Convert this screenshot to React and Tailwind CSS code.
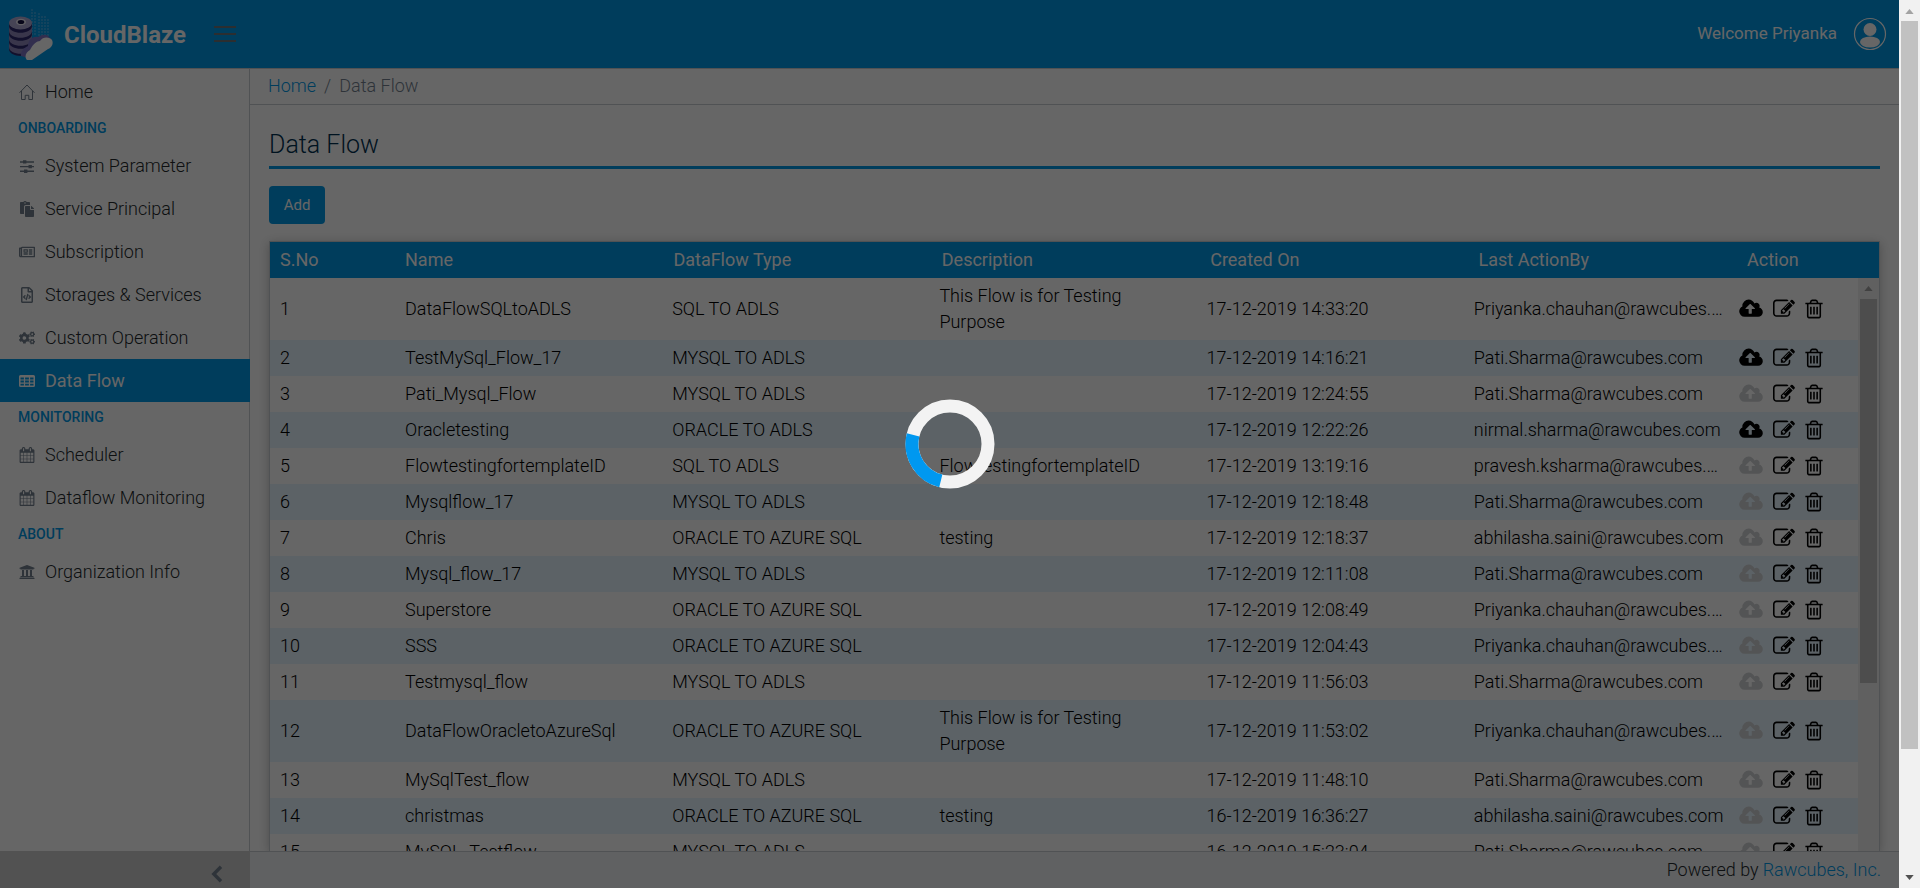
import React from "react";
import { FaPaste, FaRegNewspaper, FaRegFileCode, FaCogs, FaUniversity } from "react-icons/fa";

function HomeIcon({ className }) {
  return (
    <svg viewBox="0 0 16 16" className={className} fill="none" stroke="currentColor" strokeWidth="1">
      <path d="M0.5 8.8 8 1l7.5 7.8M2.5 7v8.5h3.7v-4.2h3.6v4.2h3.7V7" />
    </svg>
  );
}

function SlidersIcon({ className }) {
  return (
    <svg viewBox="0 0 16 16" className={className} fill="currentColor">
      <path d="M1 3.300h14v1.400H1zM4 2.200h3.400v3.400H4zM1 7.900h14v1.400H1zM9.500 6.900h3.400v3.400H9.500zM1 12.500h14v1.400H1zM5 11.500h3.400v3.400H5z" />
    </svg>
  );
}

function TableIcon({ className }) {
  return (
    <svg viewBox="0 0 16 16" className={className} fill="currentColor" fillRule="evenodd">
      <path d="M1.500 2h13A1.500 1.500 0 0 1 16 3.500v9a1.500 1.500 0 0 1-1.500 1.500h-13A1.500 1.500 0 0 1 0 12.500v-9A1.500 1.500 0 0 1 1.500 2zM1.500 4.500v2h3.400v-2zm4.600 0v2h3.800v-2zm5 0v2h3.400v-2zM1.500 7.600v2h3.400v-2zm4.600 0v2h3.800v-2zm5 0v2h3.400v-2zM1.500 10.700v1.800h3.400v-1.800zm4.600 0v1.800h3.800v-1.800zm5 0v1.800h3.400v-1.800z" />
    </svg>
  );
}

function CalendarIcon({ className }) {
  return (
    <svg viewBox="0 0 1792 1792" className={className} fill="currentColor">
      <path d="M192 1664h288v-288h-288v288zm352 0h320v-288h-320v288zm-352-352h288v-320h-288v320zm352 0h320v-320h-320v320zm-352-384h288v-288h-288v288zm736 736h320v-288h-320v288zm-384-736h320v-288h-320v288zm768 736h288v-288h-288v288zm-384-352h320v-320h-320v320zm-352-864v-288q0-13-9.500-22.500t-22.500-9.500h-64q-13 0-22.500 9.500t-9.500 22.500v288q0 13 9.500 22.500t22.500 9.500h64q13 0 22.500-9.500t9.500-22.500zm736 864h288v-320h-288v320zm-384-384h320v-288h-320v288zm384 0h288v-288h-288v288zm32-480v-288q0-13-9.500-22.500t-22.500-9.500h-64q-13 0-22.500 9.500t-9.500 22.500v288q0 13 9.500 22.500t22.500 9.500h64q13 0 22.500-9.500t9.500-22.500zm384-64v1280q0 52-38 90t-90 38h-1408q-52 0-90-38t-38-90v-1280q0-52 38-90t90-38h128v-96q0-66 47-113t113-47h64q66 0 113 47t47 113v96h384v-96q0-66 47-113t113-47h64q66 0 113 47t47 113v96h128q52 0 90 38t38 90z" />
    </svg>
  );
}

function ChevronLeftIcon({ className }) {
  return (
    <svg viewBox="0 0 12 18" className={className} fill="none" stroke="currentColor" strokeWidth="3.400">
      <path d="M10 1.800 2.800 9l7.200 7.200" />
    </svg>
  );
}

function CloudUploadIcon({ className }) {
  return (
    <svg viewBox="-64 0 1920 1792" className={className} fill="currentColor">
      <path d="M1216 864q0-14-9-23l-352-352q-9-9-23-9t-23 9l-351 351q-10 12-10 24 0 14 9 23t23 9h224v352q0 13 9.500 22.500t22.500 9.500h192q13 0 22.500-9.500t9.500-22.500v-352h224q13 0 22.500-9.500t9.500-22.500zm640 288q0 159-112.500 271.500t-271.500 112.500h-1088q-185 0-316.500-131.500t-131.500-316.500q0-130 70-240t188-165q-2-30-2-43 0-212 150-362t362-150q156 0 285.500 87t188.500 231q71-62 166-62 106 0 181 75t75 181q0 76-41 138 130 31 213.500 135.500t83.500 238.500z" />
    </svg>
  );
}

function EditIcon({ className }) {
  return (
    <svg viewBox="0 0 1792 1792" className={className} fill="currentColor">
      <path d="M888 1184l116-116-152-152-116 116v56h96v96h56zm440-720q-16-16-33 1l-350 350q-17 17-1 33t33-1l350-350q17-17 1-33zm80 594v190q0 119-84.500 203.500t-203.500 84.500h-832q-119 0-203.500-84.500t-84.500-203.500v-832q0-119 84.500-203.500t203.500-84.500h832q63 0 117 25 15 7 18 23 3 17-9 29l-49 49q-14 14-32 8-23-6-45-6h-832q-66 0-113 47t-47 113v832q0 66 47 113t113 47h832q66 0 113-47t47-113v-126q0-13 9-22l64-64q15-15 35-7t20 29zm-96-738l288 288-672 672h-288v-288zm444 132l-92 92-288-288 92-92q28-28 68-28t68 28l152 152q28 28 28 68t-28 68z" />
    </svg>
  );
}

function TrashIcon({ className }) {
  return (
    <svg viewBox="0 0 1792 1792" className={className} fill="currentColor">
      <path d="M704 736v576q0 14-9 23t-23 9h-64q-14 0-23-9t-9-23v-576q0-14 9-23t23-9h64q14 0 23 9t9 23zm256 0v576q0 14-9 23t-23 9h-64q-14 0-23-9t-9-23v-576q0-14 9-23t23-9h64q14 0 23 9t9 23zm256 0v576q0 14-9 23t-23 9h-64q-14 0-23-9t-9-23v-576q0-14 9-23t23-9h64q14 0 23 9t9 23zm128 724v-948h-896v948q0 22 7 40.500t14.500 27 10.500 8.500h832q3 0 10.500-8.500t14.500-27 7-40.500zm-672-1076h448l-48-117q-7-9-17-11h-317q-10 2-17 11zm928 32v64q0 14-9 23t-23 9h-96v948q0 83-47 143.500t-113 60.500h-832q-66 0-113-58.500t-47-141.500v-952h-96q-14 0-23-9t-9-23v-64q0-14 9-23t23-9h309l70-167q15-37 54-63t79-26h320q40 0 79 26t54 63l70 167h309q14 0 23 9t9 23z" />
    </svg>
  );
}

function Logo() {
  return (
    <svg viewBox="0 0 46 52" className="h-[52px] w-[46px] shrink-0">
      <g stroke="#8cc8f0" strokeOpacity="0.7" strokeWidth="1" strokeDasharray="2 1" fill="none">
        <path d="M24 1v26M27 4v24M31 5v24M34 8v20M37 8v20M40 11v18" />
      </g>
      <path d="M1 15v26c0 4 5 7 12 7s11-3 11-7V15z" fill="#2d2a6e" />
      <g fill="#8f88bb">
        <path d="M1 34c0 9 23 9 23 0v5c0 9-23 9-23 0z" />
        <path d="M1 26c0 9 23 9 23 0v5c0 9-23 9-23 0z" />
        <path d="M1 18c0 9 23 9 23 0v5c0 9-23 9-23 0z" />
        <ellipse cx="12.500" cy="15" rx="11.500" ry="6.500" fill="#b0aad4" />
      </g>
      <ellipse cx="13" cy="14" rx="5" ry="3.300" fill="#f0eef8" />
      <ellipse cx="13" cy="14" rx="3.300" ry="2" fill="#12103f" />
      <path d="M13 48c-1-4 3-8 7-10 0-7 6-10 10-9 5-3 9-3 11 0l3 3-24 18z" fill="#7d74c4" />
      <path d="M19 52c-3-3-1-8 3-10 3-6 7-9 10-9 3-5 10-4 12-1 2 4-1 8-4 9L24 52c-2 1-4 1-5 0z" fill="#fff" />
    </svg>
  );
}

const NAV = [
  { items: [{ label: "Home", icon: HomeIcon }] },
  {
    title: "ONBOARDING",
    items: [
      { label: "System Parameter", icon: SlidersIcon },
      { label: "Service Principal", icon: FaPaste },
      { label: "Subscription", icon: FaRegNewspaper },
      { label: "Storages & Services", icon: FaRegFileCode },
      { label: "Custom Operation", icon: FaCogs },
      { label: "Data Flow", icon: TableIcon, active: true },
    ],
  },
  {
    title: "MONITORING",
    items: [
      { label: "Scheduler", icon: CalendarIcon },
      { label: "Dataflow Monitoring", icon: CalendarIcon },
    ],
  },
  { title: "ABOUT", items: [{ label: "Organization Info", icon: FaUniversity }] },
];

const PATI = "Pati.Sharma@rawcubes.com";
const PRIYANKA = "Priyanka.chauhan@rawcubes.com";
const ABHILASHA = "abhilasha.saini@rawcubes.com";

const ROWS = [
  ["DataFlowSQLtoADLS", "SQL TO ADLS", "This Flow is for Testing Purpose", "17-12-2019 14:33:20", PRIYANKA, true],
  ["TestMySql_Flow_17", "MYSQL TO ADLS", "", "17-12-2019 14:16:21", PATI, true],
  ["Pati_Mysql_Flow", "MYSQL TO ADLS", "", "17-12-2019 12:24:55", PATI, false],
  ["Oracletesting", "ORACLE TO ADLS", "", "17-12-2019 12:22:26", "nirmal.sharma@rawcubes.com", true],
  ["FlowtestingfortemplateID", "SQL TO ADLS", "FlowtestingfortemplateID", "17-12-2019 13:19:16", "pravesh.ksharma@rawcubes.com", false],
  ["Mysqlflow_17", "MYSQL TO ADLS", "", "17-12-2019 12:18:48", PATI, false],
  ["Chris", "ORACLE TO AZURE SQL", "testing", "17-12-2019 12:18:37", ABHILASHA, false],
  ["Mysql_flow_17", "MYSQL TO ADLS", "", "17-12-2019 12:11:08", PATI, false],
  ["Superstore", "ORACLE TO AZURE SQL", "", "17-12-2019 12:08:49", PRIYANKA, false],
  ["SSS", "ORACLE TO AZURE SQL", "", "17-12-2019 12:04:43", PRIYANKA, false],
  ["Testmysql_flow", "MYSQL TO ADLS", "", "17-12-2019 11:56:03", PATI, false],
  ["DataFlowOracletoAzureSql", "ORACLE TO AZURE SQL", "This Flow is for Testing Purpose", "17-12-2019 11:53:02", PRIYANKA, false],
  ["MySqlTest_flow", "MYSQL TO ADLS", "", "17-12-2019 11:48:10", PATI, false],
  ["christmas", "ORACLE TO AZURE SQL", "testing", "16-12-2019 16:36:27", ABHILASHA, false],
  ["MySQL_Testflow", "MYSQL TO ADLS", "", "16-12-2019 15:23:04", PATI, false],
];

const COLUMNS = ["S.No", "Name", "DataFlow Type", "Description", "Created On", "Last ActionBy", "Action"];

function Header() {
  return (
    <header className="flex h-[69px] shrink-0 items-center border-b border-[#c8ced3] bg-[#0098e6] pl-2 pr-3 text-white">
      <a href="#home" className="flex items-center gap-[10px]">
        <Logo />
        <span className="pt-0.5 text-2xl font-bold">CloudBlaze</span>
      </a>
      <button type="button" aria-label="Toggle menu" className="ml-7 flex w-[22px] flex-col gap-[5px]">
        <span className="h-0.5 w-full bg-[#6d7478]" />
        <span className="h-0.5 w-full bg-[#6d7478]" />
        <span className="h-0.5 w-full bg-[#6d7478]" />
      </button>
      <div className="ml-auto flex items-center gap-4">
        <span className="text-[17px]">Welcome Priyanka</span>
        <button type="button" aria-label="Account">
          <svg viewBox="0 0 34 34" className="size-[34px]">
            <circle cx="17" cy="17" r="15.500" fill="none" stroke="#fff" strokeWidth="1.200" />
            <circle cx="17" cy="12.500" r="6.500" fill="#fff" />
            <ellipse cx="17" cy="25" rx="10" ry="5.500" fill="#fff" />
          </svg>
        </button>
      </div>
    </header>
  );
}

function Sidebar() {
  return (
    <aside className="flex w-[250px] shrink-0 flex-col">
      <nav className="flex-1 border-r border-[#c8ced3] pt-px">
        {NAV.map((group) => (
          <div key={group.title || "top"}>
            {group.title && (
              <h2 className="pl-[18px] text-sm leading-[31px] font-medium text-[#0098e6]">{group.title}</h2>
            )}
            {group.items.map(({ label, icon: Icon, active }) => (
              <a
                key={label}
                href="#nav"
                className={
                  active
                    ? "-mr-px flex items-center gap-[9px] bg-[#0098e6] py-2 pl-[18px] leading-[27px] text-white"
                    : "flex items-center gap-[9px] py-2 pl-[18px] leading-[27px] font-light text-[#23282c]"
                }
              >
                <Icon className={active ? "mx-px size-4 shrink-0" : "mx-px size-4 shrink-0 text-[#73818f]"} />
                <span>{label}</span>
              </a>
            ))}
          </div>
        ))}
      </nav>
      <button type="button" aria-label="Collapse sidebar" className="flex h-[37px] shrink-0 items-center justify-end bg-[#cdcdcd] pt-2 pr-[27px] text-[#73818f]">
        <ChevronLeftIcon className="h-[18px] w-3" />
      </button>
    </aside>
  );
}

function Actions({ enabled }) {
  return (
    <div className="flex items-center">
      <button type="button" aria-label="Publish" disabled={!enabled} className={enabled ? "text-black" : "text-[#d0d2d4]"}>
        <CloudUploadIcon className="h-[22px] w-6" />
      </button>
      <button type="button" aria-label="Edit" className="ml-[10px] text-black">
        <EditIcon className="size-[22px]" />
      </button>
      <button type="button" aria-label="Delete" className="ml-2 text-black">
        <TrashIcon className="size-[22px]" />
      </button>
    </div>
  );
}

function FlowTable() {
  return (
    <section className="flex min-h-0 flex-1 flex-col border border-b-0 border-[#c8ced3] shadow-[0_2px_10px_rgba(0,0,0,0.25)]">
      <table className="w-full shrink-0 table-fixed bg-[#0098e6] text-left text-white">
        <colgroup>
          <col className="w-[125px]" />
          <col span={5} />
          <col className="w-[142px]" />
        </colgroup>
        <thead>
          <tr>
            {COLUMNS.map((name) => (
              <th key={name} scope="col" className="px-[10px] py-[5px] leading-[26px] font-normal">{name}</th>
            ))}
          </tr>
        </thead>
      </table>
      <div className="flex min-h-0 flex-1">
        <div className="min-w-0 flex-1 overflow-hidden">
          <table className="w-full table-fixed font-light text-black">
            <colgroup>
              <col className="w-[125px]" />
              <col span={5} />
              <col className="w-[127px]" />
            </colgroup>
            <tbody>
              {ROWS.map(([name, type, description, created, by, enabled], i) => (
                <tr key={name} className="leading-[26px] even:bg-[#e6f5ff]">
                  <td className="px-[10px] py-[5px]">{i + 1}</td>
                  <td className="px-[10px] py-[5px]">{name}</td>
                  <td className="px-[10px] py-[5px]">{type}</td>
                  <td className="py-[5px] pr-8 pl-[10px]">{description}</td>
                  <td className="px-[10px] py-[5px]">{created}</td>
                  <td className="truncate py-[5px] pr-1 pl-[10px]">{by}</td>
                  <td className="pl-2"><Actions enabled={enabled} /></td>
                </tr>
              ))}
            </tbody>
          </table>
        </div>
        <div className="flex w-[21px] shrink-0 flex-col items-center bg-[#f1f1f1]">
          <div className="flex h-[21px] shrink-0 items-center">
            <svg viewBox="0 0 10 6" className="h-[5px] w-[9px]" fill="#a3a3a3"><path d="M0 6 5 0l5 6z" /></svg>
          </div>
          <div className="h-[67%] w-[17px] bg-[#c1c1c1]" />
        </div>
      </div>
    </section>
  );
}

function PageScrollbar() {
  return (
    <div className="flex w-[21px] shrink-0 flex-col items-center bg-[#f1f1f1]">
      <div className="flex h-[21px] shrink-0 items-center pt-0.5">
        <svg viewBox="0 0 10 6" className="h-[5px] w-[9px]" fill="#a3a3a3"><path d="M0 6 5 0l5 6z" /></svg>
      </div>
      <div className="min-h-0 w-full flex-1 px-0.5">
        <div className="h-[86%] bg-[#c1c1c1]" />
      </div>
      <div className="flex h-[21px] shrink-0 items-center">
        <svg viewBox="0 0 10 6" className="h-[5px] w-[9px]" fill="#505050"><path d="M0 0 5 6l5-6z" /></svg>
      </div>
    </div>
  );
}

function LoadingOverlay() {
  return (
    <div role="status" aria-label="Loading" className="absolute inset-0 flex items-center justify-center bg-black/60">
      <svg viewBox="0 0 90 90" className="size-[90px]" fill="none" strokeWidth="13">
        <circle cx="45" cy="45" r="38" stroke="#f3f3f3" />
        <path d="M35.800 81.900A38 38 0 0 1 8.100 35.800" stroke="#0098f0" />
      </svg>
    </div>
  );
}

export default function App() {
  return (
    <div className="flex h-screen overflow-hidden bg-white font-['Roboto',sans-serif] text-[18px]">
      <div className="relative flex min-w-0 flex-1 flex-col">
        <Header />
        <div className="flex min-h-0 flex-1">
          <Sidebar />
          <div className="flex min-w-0 flex-1 flex-col">
            <nav aria-label="Breadcrumb" className="flex h-9 shrink-0 items-center gap-2 border-b border-[#c8ced3] pb-0.5 pl-[18px] font-light text-[#73818f]">
              <a href="#home" className="text-[#0098e6]">Home</a>
              <span>/</span>
              <span>Data Flow</span>
            </nav>
            <main className="flex min-h-0 flex-1 flex-col overflow-hidden px-[19px] pt-[22px]">
              <h1 className="shrink-0 border-b-[3px] border-[#0098e6] pb-[3px] text-[25px] leading-9 font-light text-[#003050]">Data Flow</h1>
              <div className="shrink-0 py-[17px]">
                <button type="button" className="h-[38px] w-14 rounded bg-[#0098e6] text-[15px] text-white">Add</button>
              </div>
              <FlowTable />
            </main>
            <footer className="flex h-[37px] shrink-0 items-center justify-end gap-1 border-t border-[#c8ced3] bg-[#f0f3f5] pr-[18px] pb-0.5 font-light text-[#23282c]">
              Powered by <a href="#rawcubes" className="text-[#0098e6]">Rawcubes, Inc.</a>
            </footer>
          </div>
        </div>
        <LoadingOverlay />
      </div>
      <PageScrollbar />
    </div>
  );
}
